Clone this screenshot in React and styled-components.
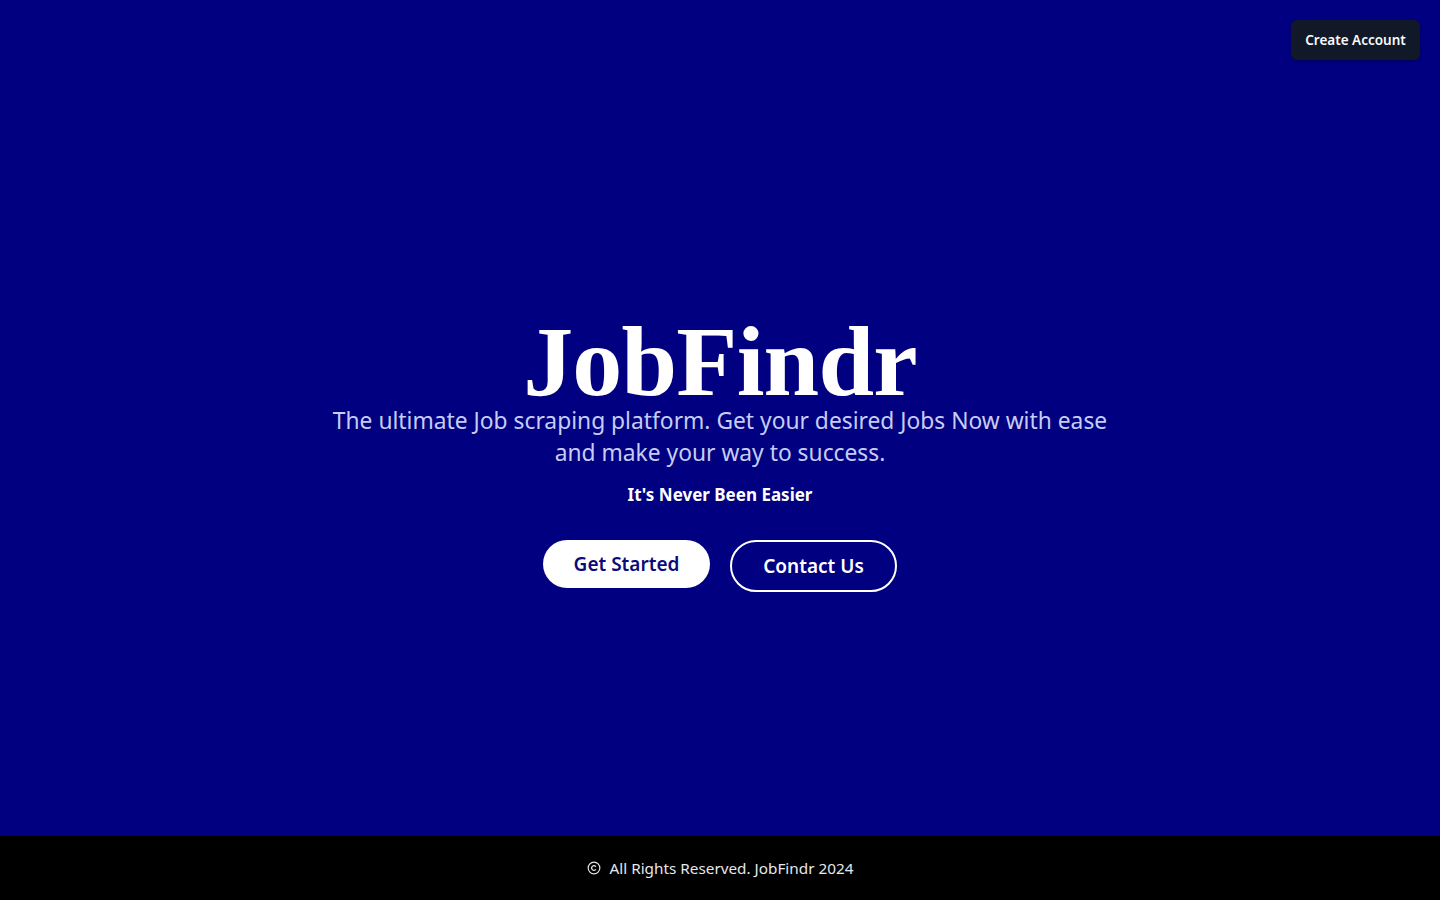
import React from "react";
import styled, { createGlobalStyle } from "styled-components";

const Global = createGlobalStyle`
  html, body { margin: 0; padding: 0; }
  body {
    background: #000080;
    font-family: "Noto Sans", "Open Sans", sans-serif;
  }
  * { box-sizing: border-box; }
`;

const Page = styled.div`
  min-height: 900px;
  display: flex;
  flex-direction: column;
  background: #000080;
`;

const Header = styled.header`
  height: 80px;
  padding: 20px;
  display: flex;
  justify-content: flex-end;
  align-items: flex-start;
`;

const AccountButton = styled.button`
  height: 40px;
  width: 129px;
  border: none;
  border-radius: 6px;
  background: #111827;
  color: #f9fafb;
  font-family: inherit;
  font-size: 13.5px;
  font-weight: 600;
  box-shadow: 0 1px 3px rgba(0, 0, 0, 0.3);
  cursor: pointer;
`;

const Main = styled.main`
  flex: 1;
  display: flex;
  flex-direction: column;
  align-items: center;
  justify-content: center;
  padding-bottom: 12px;
  text-align: center;
`;

const Title = styled.h1`
  margin: 0;
  height: 93px;
  font-family: "Liberation Serif", "DejaVu Serif", serif;
  font-size: 100px;
  line-height: 100px;
  font-weight: 700;
  color: #ffffff;
  letter-spacing: -0.8px;
`;

const Subtitle = styled.p`
  margin: 0;
  max-width: 790px;
  font-size: 22.8px;
  line-height: 32px;
  color: #c7cdf2;
  position: relative;
`;

const Tagline = styled.p`
  margin: 12px 0 0;
  font-size: 17px;
  line-height: 28px;
  font-weight: 700;
  color: #ffffff;
`;

const Actions = styled.div`
  margin-top: 31px;
  display: flex;
  align-items: flex-start;
  gap: 20px;
`;

const Pill = styled.button`
  width: 167px;
  height: ${(p) => (p.$outline ? "52px" : "48px")};
  border-radius: 9999px;
  border: ${(p) => (p.$outline ? "2px solid #ffffff" : "none")};
  background: ${(p) => (p.$outline ? "transparent" : "#ffffff")};
  color: ${(p) => (p.$outline ? "#ffffff" : "#0b0b7a")};
  font-family: inherit;
  font-size: 19px;
  font-weight: 600;
  cursor: pointer;
`;

const Footer = styled.footer`
  height: 64px;
  background: #000000;
  display: flex;
  align-items: center;
  justify-content: center;
  gap: 9px;
  color: #e5e7eb;
  font-size: 15.3px;
`;

const CopyIcon = () => (
  <svg width="14" height="14" viewBox="0 0 24 24" fill="none" stroke="#e5e7eb" strokeWidth="2" strokeLinecap="round" strokeLinejoin="round">
    <circle cx="12" cy="12" r="10" />
    <path d="M14.83 14.83a4 4 0 1 1 0-5.66" />
  </svg>
);

export default function App() {
  return (
    <>
      <Global />
      <Page>
        <Header>
          <AccountButton>Create Account</AccountButton>
        </Header>
        <Main>
          <Title>JobFindr</Title>
          <Subtitle>
            The ultimate Job scraping platform. Get your desired Jobs Now with ease and make your way to success.
          </Subtitle>
          <Tagline>It's Never Been Easier</Tagline>
          <Actions>
            <Pill>Get Started</Pill>
            <Pill $outline>Contact Us</Pill>
          </Actions>
        </Main>
        <Footer>
          <CopyIcon />
          <span>All Rights Reserved. JobFindr 2024</span>
        </Footer>
      </Page>
    </>
  );
}
